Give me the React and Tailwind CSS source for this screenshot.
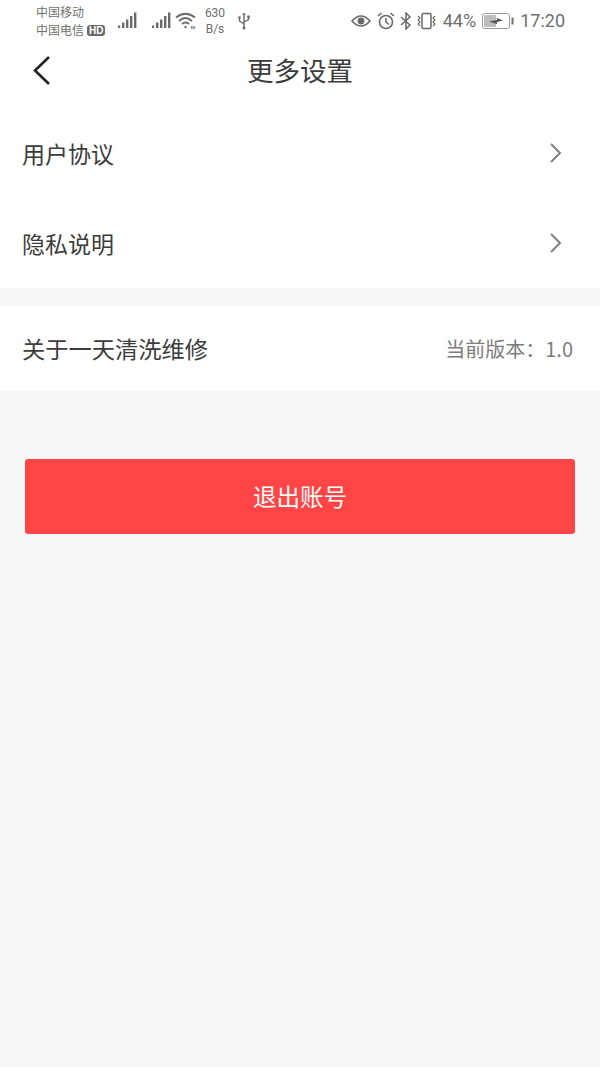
const cjk = { fontFamily: '"Noto Sans CJK SC", "Liberation Sans", sans-serif' };

function Signal() {
  return (
    <svg width="20" height="18" viewBox="0 0 20 18" fill="#6a6a6a">
      <rect x="1" y="13.5" width="2.2" height="2.5" />
      <rect x="5" y="10.5" width="2.4" height="5.5" />
      <rect x="9" y="7.5" width="2.4" height="8.5" />
      <rect x="13" y="4" width="2.4" height="12" />
      <rect x="17" y="0.5" width="2.4" height="15.5" />
    </svg>
  );
}

function Chevron() {
  return (
    <svg width="14" height="20" viewBox="0 0 14 20" fill="none" stroke="#808080" strokeWidth="2">
      <path d="M2 1 L11 10 L2 19" />
    </svg>
  );
}

function Row({ label }) {
  return (
    <div className="flex h-[90px] items-center justify-between pl-[22px] pr-[37px]">
      <span className="text-[23px] text-[#3c3c3c]">{label}</span>
      <Chevron />
    </div>
  );
}

function StatusBar() {
  return (
    <div className="flex h-[40px] items-center pt-[2px] pl-[36px] pr-[35px] text-[#6f6f6f]">
      <div className="flex w-[70px] shrink-0 flex-col text-[12px] leading-[18px] whitespace-nowrap">
        <span>中国移动</span>
        <span className="flex items-center gap-[3px]">
          中国电信
          <span className="rounded-[3px] bg-[#6a6a6a] px-[2px] text-[10px] leading-[11px] font-bold text-white" style={{ fontFamily: '"Liberation Sans", sans-serif' }}>HD</span>
        </span>
      </div>
      <div className="ml-[11px] flex items-center">
        <Signal />
      </div>
      <div className="ml-[14px] flex items-center">
        <Signal />
      </div>
      <svg className="ml-[4px]" width="22" height="20" viewBox="0 0 22 20" fill="none" stroke="#6a6a6a" strokeWidth="1.8">
        <path d="M1 6.5 Q10.5 -1 20 6.5" />
        <path d="M4 10 Q10.5 4 17 10" />
        <path d="M7 13 Q10.5 10 14 13" />
        <circle cx="10.5" cy="16" r="1.2" fill="#6a6a6a" stroke="none" />
        <path d="M15.5 15.5 l2 -2 l0 4z M20.5 15.5 l-2 -2 l0 4z" fill="#6a6a6a" stroke="none" transform="translate(0 1)" />
      </svg>
      <div className="ml-[6px] flex w-[24px] flex-col items-center text-[12px] leading-[16px]" style={{ fontFamily: '"Roboto", sans-serif' }}>
        <span>630</span>
        <span>B/s</span>
      </div>
      <svg className="ml-[10px]" width="14" height="18" viewBox="0 0 14 18" fill="none" stroke="#6a6a6a" strokeWidth="1.4">
        <path d="M7 2 V16" />
        <path d="M7 12 L2.5 9 V6" />
        <path d="M7 10 L11.5 7.5 V5" />
        <circle cx="2.5" cy="5.5" r="1.3" fill="#6a6a6a" stroke="none" />
        <rect x="10.2" y="3.5" width="2.6" height="2.6" fill="#6a6a6a" stroke="none" />
        <path d="M5.2 3 L7 0.5 L8.8 3z" fill="#6a6a6a" stroke="none" />
        <circle cx="7" cy="16" r="1.5" fill="#6a6a6a" stroke="none" />
      </svg>
      <div className="ml-auto flex items-center">
        <svg width="20" height="14" viewBox="0 0 20 14" fill="none" stroke="#6a6a6a" strokeWidth="1.6">
          <path d="M1 7 Q10 -3 19 7 Q10 17 1 7Z" />
          <circle cx="10" cy="7" r="3.4" fill="#6a6a6a" stroke="none" />
        </svg>
        <svg className="ml-[6px]" width="18" height="18" viewBox="0 0 18 18" fill="none" stroke="#6a6a6a" strokeWidth="1.6">
          <circle cx="9" cy="10" r="6.5" />
          <path d="M9 6 V10 L12 12.5" />
          <path d="M1 4 L4.5 1 M17 4 L13.5 1" />
        </svg>
        <svg className="ml-[5px]" width="12" height="18" viewBox="0 0 12 18" fill="none" stroke="#6a6a6a" strokeWidth="1.5">
          <path d="M1 5 L10 13 L6 17 V1 L10 5 L1 13" />
        </svg>
        <svg className="ml-[5px]" width="19" height="18" viewBox="0 0 19 18" fill="none" stroke="#6a6a6a" strokeWidth="1.5">
          <rect x="5" y="1.5" width="9" height="15" rx="1.5" />
          <path d="M1 4 L3 6 L1 8 L3 10 L1 12 L3 14" strokeWidth="1.1" />
          <path d="M18 4 L16 6 L18 8 L16 10 L18 12 L16 14" strokeWidth="1.1" />
        </svg>
        <span className="ml-[7px] text-[18px] leading-none" style={{ fontFamily: '"Roboto", sans-serif' }}>44%</span>
        <svg className="ml-[6px]" width="32" height="16" viewBox="0 0 32 16" fill="none">
          <rect x="0.5" y="0.5" width="27" height="15" rx="2" stroke="#9a9a9a" />
          <rect x="2" y="2" width="12" height="12" fill="#bdbdbd" />
          <path d="M7 8.5 L15 7 L15 5 L21 7.5 L15 9 L15 11z" fill="#555555" />
          <rect x="29.5" y="4.5" width="2" height="7" fill="#6f6f6f" />
        </svg>
        <span className="ml-[6px] text-[18px] leading-none" style={{ fontFamily: '"Roboto", sans-serif' }}>17:20</span>
      </div>
    </div>
  );
}

export default function App() {
  return (
    <div className="flex min-h-[1067px] w-[600px] flex-col bg-[#f8f8fa]" style={cjk}>
      <div className="bg-white">
        <StatusBar />
        <div className="relative flex h-[68px] items-center justify-center">
          <svg className="absolute top-[15px] left-[32px]" width="20" height="31" viewBox="0 0 20 31" fill="none" stroke="#222222" strokeWidth="2.6">
            <path d="M17 2 L3 15.5 L17 29" />
          </svg>
          <span className="relative top-[-4px] text-[26.5px] text-[#3c3c3c]">更多设置</span>
        </div>
        <Row label="用户协议" />
        <Row label="隐私说明" />
      </div>
      <div className="mt-[18px] flex h-[85px] items-center justify-between bg-white pr-[27px] pl-[22px]">
        <span className="text-[23.25px] text-[#3c3c3c]">关于一天清洗维修</span>
        <span className="text-[20px] text-[#7d7d7d]">当前版本：1.0</span>
      </div>
      <div className="mx-[25px] mt-[68px] flex h-[75px] items-center justify-center rounded-[3px] bg-[#ff4545] text-[23.5px] text-white">
        退出账号
      </div>
    </div>
  );
}
